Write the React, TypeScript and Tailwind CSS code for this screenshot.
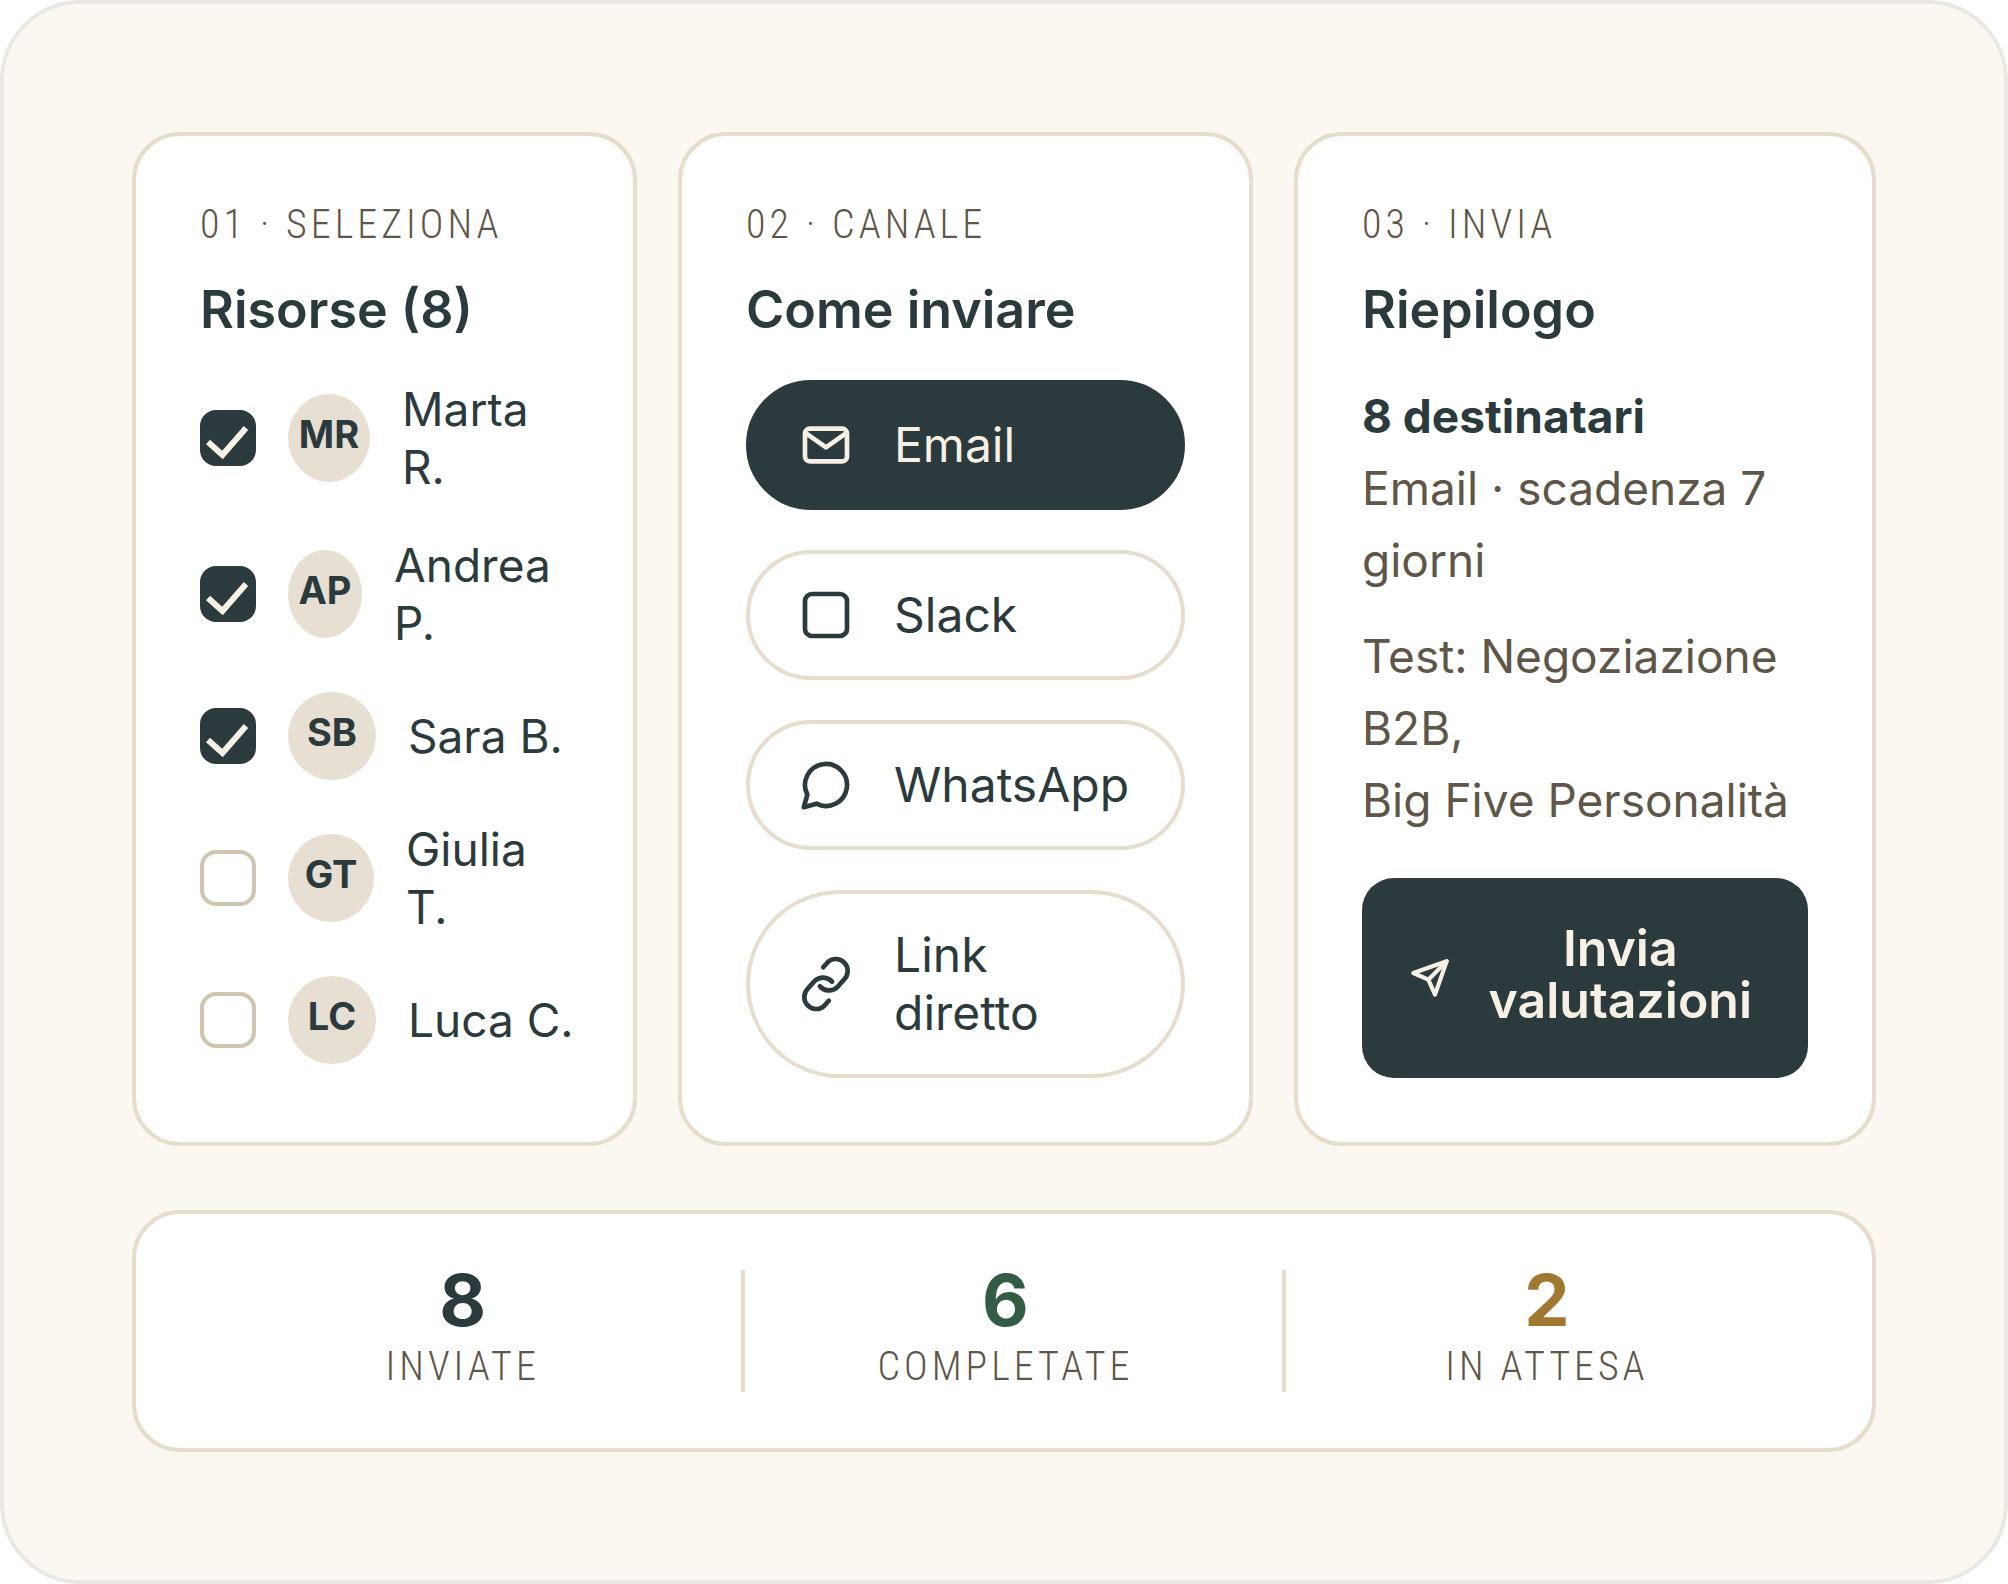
import type { ReactNode } from "react";

const people = [
  { initials: "MR", name: "Marta\nR.", checked: true, size: "w-[82px]" },
  { initials: "AP", name: "Andrea\nP.", checked: true, size: "w-[74px]" },
  { initials: "SB", name: "Sara B.", checked: true, size: "w-[88px]" },
  { initials: "GT", name: "Giulia\nT.", checked: false, size: "w-[86px]" },
  { initials: "LC", name: "Luca C.", checked: false, size: "w-[88px]" },
];

const channels = [
  {
    label: "Email",
    active: true,
    icon: (
      <>
        <rect x="3" y="5" width="18" height="14" rx="2" />
        <path d="M3.5 7l8.5 6 8.5-6" />
      </>
    ),
  },
  {
    label: "Slack",
    active: false,
    icon: <rect x="3" y="3" width="18" height="18" rx="3" />,
  },
  {
    label: "WhatsApp",
    active: false,
    icon: <path d="M7.9 20A9 9 0 1 0 4 16.1L2.5 21.5Z" />,
  },
  {
    label: "Link\ndiretto",
    active: false,
    icon: (
      <>
        <path d="M9.4 13a5.2 5.2 0 0 0 7.4.4l3-3.4a5.1 5.1 0 0 0-6.9-7.5l-2.1 2.3" />
        <path d="M14.6 11a5.2 5.2 0 0 0-7.4-.4l-3 3.4a5.1 5.1 0 0 0 6.9 7.5l2.1-2.3" />
      </>
    ),
  },
];

const stats = [
  { value: 8, label: "Inviate", color: "text-[#2b3a3d]" },
  { value: 6, label: "Completate", color: "text-[#335c45]" },
  { value: 2, label: "In attesa", color: "text-[#a1782f]" },
];

function Card({ step, title, children }: { step: string; title: string; children: ReactNode }) {
  return (
    <section className="flex flex-col rounded-[48px] border-4 border-[#e6ddcd] bg-white p-16">
      <p className="mb-7 font-['Roboto_Condensed','Liberation_Sans_Narrow',sans-serif] text-[40px] leading-[50px] font-light tracking-[4px] whitespace-nowrap text-[#5e5648] uppercase">
        {step}
      </p>
      <h2 className="mb-[38px] text-[52px] leading-[64px] font-semibold whitespace-nowrap">{title}</h2>
      {children}
    </section>
  );
}

function Person({ initials, name, checked, size }: (typeof people)[number]) {
  return (
    <li>
      <label className="flex items-center gap-8">
        <span className="grid shrink-0">
          <input
            type="checkbox"
            defaultChecked={checked}
            className="peer col-start-1 row-start-1 size-14 appearance-none rounded-2xl border-4 border-[#cfc4b0] bg-white checked:border-[#2b3a3d] checked:bg-[#2b3a3d]"
          />
          <svg
            viewBox="0 0 56 56"
            className="pointer-events-none invisible col-start-1 row-start-1 size-14 peer-checked:visible"
            fill="none"
            stroke="#f7f0e4"
            strokeWidth="6"
          >
            <path d="M8 32l14.5 13L46 18" />
          </svg>
        </span>
        <span
          className={`${size} flex h-[88px] shrink-0 items-center justify-center rounded-[50%] bg-[#e6dfd2] pb-2 text-[38px] leading-none font-bold`}
        >
          {initials}
        </span>
        <span className="text-[46px] leading-[58px] whitespace-pre">{name}</span>
      </label>
    </li>
  );
}

export default function App() {
  return (
    <main className="rounded-[80px] border-4 border-[#e9e8e3] bg-[#fbf8f1] p-32 font-['Inter',sans-serif] text-[#2b3a3d]">
      <div className="grid grid-cols-[minmax(0,505fr)_minmax(0,575fr)_minmax(0,582fr)] gap-[41px]">
        <Card step="01 · Seleziona" title="Risorse (8)">
          <ul className="flex flex-col gap-10">
            {people.map((person) => (
              <Person key={person.initials} {...person} />
            ))}
          </ul>
        </Card>

        <Card step="02 · Canale" title="Come inviare">
          <div className="flex flex-col gap-10">
            {channels.map(({ label, active, icon }) => (
              <button
                key={label}
                type="button"
                aria-pressed={active}
                className={`flex items-center gap-10 rounded-full border-4 px-12 py-8 text-left text-[48px] leading-[58px] whitespace-pre ${
                  active ? "border-[#2b3a3d] bg-[#2b3a3d] text-[#f7f0e4]" : "border-[#e6ddcd] bg-white"
                }`}
              >
                <svg
                  viewBox="0 0 24 24"
                  className="size-14 shrink-0"
                  fill="none"
                  stroke="currentColor"
                  strokeWidth="2"
                  strokeLinecap="round"
                  strokeLinejoin="round"
                >
                  {icon}
                </svg>
                {label}
              </button>
            ))}
          </div>
        </Card>

        <Card step="03 · Invia" title="Riepilogo">
          <div className="flex flex-col gap-6 text-[46px] leading-[72px] whitespace-nowrap text-[#5e5648]">
            <p>
              <strong className="font-bold text-[#2b3a3d]">8 destinatari</strong>
              <br />
              Email · scadenza 7
              <br />
              giorni
            </p>
            <p>
              Test: Negoziazione
              <br />
              B2B,
              <br />
              Big Five Personalità
            </p>
          </div>
          <button
            type="button"
            className="mt-auto flex items-center justify-between rounded-[32px] bg-[#2b3a3d] py-11 pr-14 pl-12 text-[#f7f0e4]"
          >
            <svg
              viewBox="0 0 24 24"
              className="size-10 shrink-0"
              fill="none"
              stroke="currentColor"
              strokeWidth="2.5"
              strokeLinecap="round"
              strokeLinejoin="round"
            >
              <path d="M22 2L11 13" />
              <path d="M22 2l-7 20-4-9-9-4z" />
            </svg>
            <span className="pb-2 text-[50px] leading-[52px] font-semibold">
              Invia
              <br />
              valutazioni
            </span>
          </button>
        </Card>
      </div>

      <dl className="mt-16 grid grid-cols-[545fr_540fr_522fr] rounded-[48px] border-4 border-[#e6ddcd] bg-white px-16 py-14 text-center">
        {stats.map(({ value, label, color }) => (
          <div
            key={label}
            className="flex flex-col-reverse border-[#e6ddcd] not-last:border-r-4 not-last:pr-4"
          >
            <dt className="font-['Roboto_Condensed','Liberation_Sans_Narrow',sans-serif] text-[40px] leading-[50px] font-light tracking-[4px] text-[#5e5648] uppercase">
              {label}
            </dt>
            <dd className={`mb-3 text-[72px] leading-[60px] font-bold ${color}`}>{value}</dd>
          </div>
        ))}
      </dl>
    </main>
  );
}
